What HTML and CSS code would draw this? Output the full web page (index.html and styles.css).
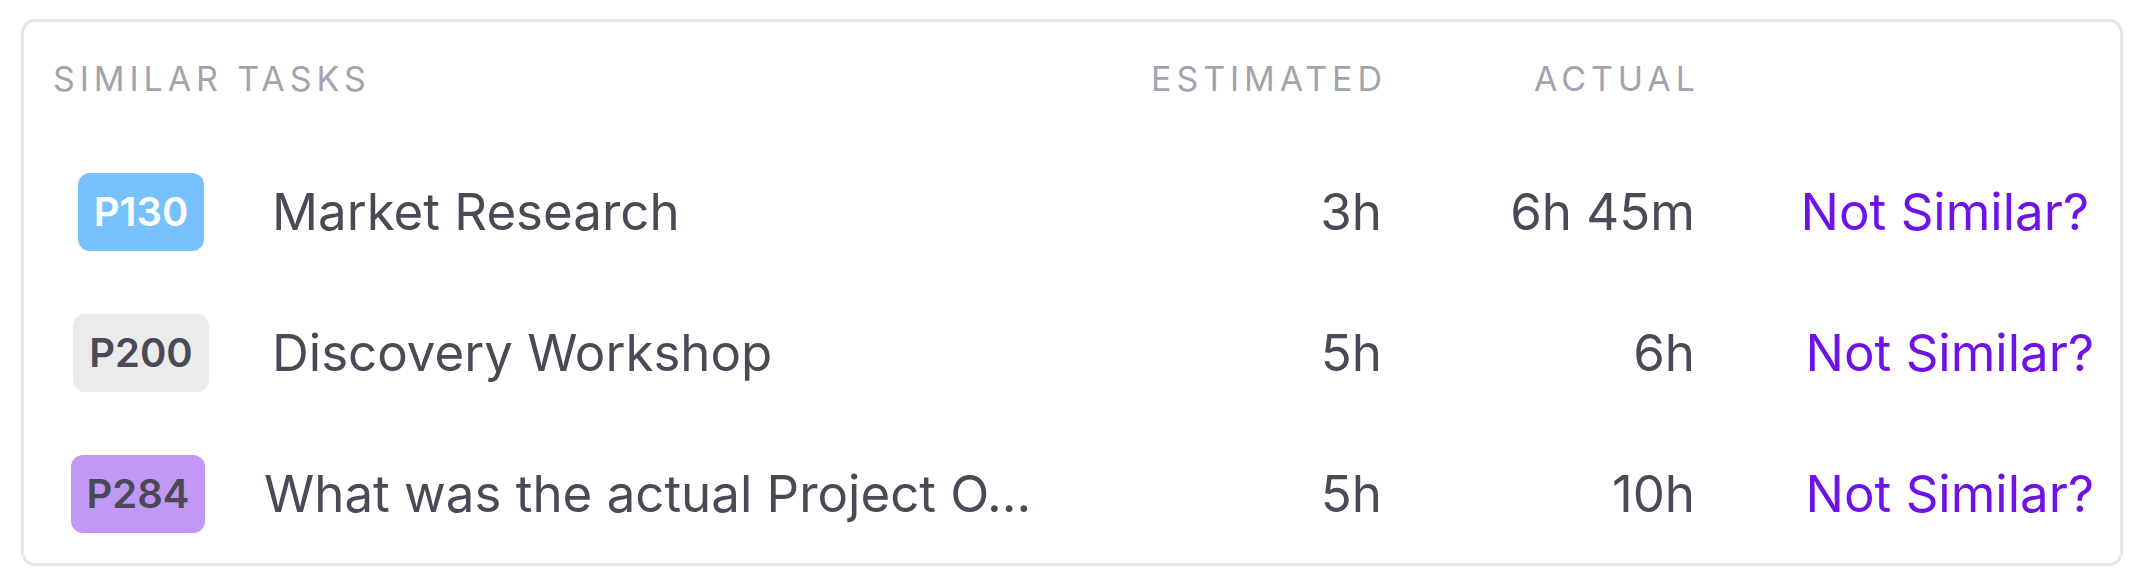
FILE: index.html
```html
<!DOCTYPE html>
<html lang="en">
<head>
<meta charset="utf-8">
<title>Similar Tasks</title>
<link rel="stylesheet" href="styles.css">
</head>
<body>
  <section class="card">
    <div class="grid">
      <div class="head head-title">Similar Tasks</div>
      <div class="head head-num">Estimated</div>
      <div class="head head-num">Actual</div>
      <div class="head"></div>

      <div class="cell cell-badge"><span class="badge badge-blue">P130</span></div>
      <div class="cell cell-name">Market Research</div>
      <div class="cell cell-num">3h</div>
      <div class="cell cell-num">6h 45m</div>
      <div class="cell cell-link"><a class="link" href="#">Not Similar?</a></div>

      <div class="cell cell-badge"><span class="badge badge-gray">P200</span></div>
      <div class="cell cell-name">Discovery Workshop</div>
      <div class="cell cell-num">5h</div>
      <div class="cell cell-num">6h</div>
      <div class="cell cell-link"><a class="link link-shift" href="#">Not Similar?</a></div>

      <div class="cell cell-badge cell-badge-tight"><span class="badge badge-purple">P284</span></div>
      <div class="cell cell-name cell-name-tight">What was the actual Project O...</div>
      <div class="cell cell-num">5h</div>
      <div class="cell cell-num">10h</div>
      <div class="cell cell-link"><a class="link link-shift" href="#">Not Similar?</a></div>
    </div>
  </section>
</body>
</html>
```

FILE: styles.css
```css
* {
  box-sizing: border-box;
}

html, body {
  margin: 0;
  padding: 0;
  background: #ffffff;
}

body {
  font-family: Inter, "Noto Sans", "Liberation Sans", sans-serif;
  color: #4a4a57;
  padding: 19px 19px 22px 21px;
}

.card {
  width: 2102px;
  height: 547px;
  border: 3px solid #e5e5ed;
  border-radius: 14px;
  padding: 0 31px 0 29px;
  background: #ffffff;
}

.grid {
  display: grid;
  grid-template-columns: 176px 1fr 280px 313px 394px;
  grid-template-rows: 119px repeat(3, 141px);
}

.head {
  padding-top: 37px;
  font-size: 34px;
  line-height: 40px;
  font-weight: 400;
  letter-spacing: 0.145em;
  text-transform: uppercase;
  color: #a3a3ad;
  white-space: nowrap;
}

.head-title {
  grid-column: 1 / span 2;
}

.head-num {
  text-align: right;
  margin-right: -0.145em;
}

.cell {
  display: flex;
  align-items: center;
  font-size: 51px;
  line-height: 60px;
  white-space: nowrap;
}

.cell-badge {
  justify-content: center;
}

.cell-badge-tight {
  padding-right: 6px;
}

.cell-name {
  padding-left: 43px;
  overflow: hidden;
}

.cell-name-tight {
  padding-left: 35px;
}

.cell-num {
  justify-content: flex-end;
}

.cell-link {
  justify-content: flex-end;
}

.badge {
  display: inline-flex;
  align-items: center;
  justify-content: center;
  height: 78px;
  padding: 0 16px;
  border-radius: 12px;
  font-size: 40px;
  font-weight: 600;
  line-height: 1;
  color: #4a4a57;
}

.badge-blue {
  background: #77c2fe;
  color: #ffffff;
}

.badge-gray {
  background: #ebebeb;
}

.badge-purple {
  background: #c198f5;
}

.link {
  color: #6e12e8;
  text-decoration: none;
}

.link-shift {
  margin-right: -5px;
}
```
